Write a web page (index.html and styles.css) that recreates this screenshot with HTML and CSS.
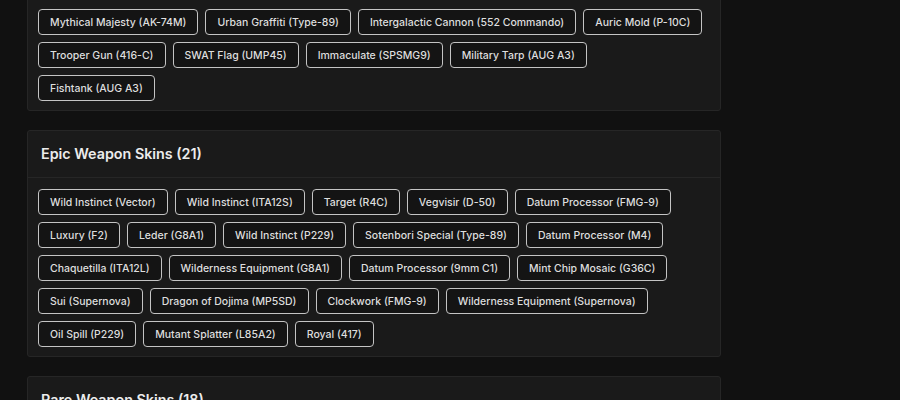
FILE: index.html
```html
<!DOCTYPE html>
<html lang="en">
<head>
<meta charset="utf-8">
<title>Weapon Skins</title>
<link rel="stylesheet" href="styles.css">
</head>
<body>
<main class="page">
  <section class="card">
    <header class="card-head"><h2 class="card-title">Legendary Weapon Skins (9)</h2></header>
    <div class="chips">
      <span class="chip">Mythical Majesty (AK-74M)</span>
      <span class="chip">Urban Graffiti (Type-89)</span>
      <span class="chip">Intergalactic Cannon (552 Commando)</span>
      <span class="chip">Auric Mold (P-10C)</span>
      <span class="chip">Trooper Gun (416-C)</span>
      <span class="chip">SWAT Flag (UMP45)</span>
      <span class="chip">Immaculate (SPSMG9)</span>
      <span class="chip">Military Tarp (AUG A3)</span>
      <span class="chip">Fishtank (AUG A3)</span>
    </div>
  </section>
  <section class="card">
    <header class="card-head"><h2 class="card-title">Epic Weapon Skins (21)</h2></header>
    <div class="chips">
      <span class="chip">Wild Instinct (Vector)</span>
      <span class="chip">Wild Instinct (ITA12S)</span>
      <span class="chip">Target (R4C)</span>
      <span class="chip">Vegvisir (D-50)</span>
      <span class="chip">Datum Processor (FMG-9)</span>
      <span class="chip">Luxury (F2)</span>
      <span class="chip">Leder (G8A1)</span>
      <span class="chip">Wild Instinct (P229)</span>
      <span class="chip">Sotenbori Special (Type-89)</span>
      <span class="chip">Datum Processor (M4)</span>
      <span class="chip">Chaquetilla (ITA12L)</span>
      <span class="chip">Wilderness Equipment (G8A1)</span>
      <span class="chip">Datum Processor (9mm C1)</span>
      <span class="chip">Mint Chip Mosaic (G36C)</span>
      <span class="chip">Sui (Supernova)</span>
      <span class="chip">Dragon of Dojima (MP5SD)</span>
      <span class="chip">Clockwork (FMG-9)</span>
      <span class="chip">Wilderness Equipment (Supernova)</span>
      <span class="chip">Oil Spill (P229)</span>
      <span class="chip">Mutant Splatter (L85A2)</span>
      <span class="chip">Royal (417)</span>
    </div>
  </section>
  <section class="card">
    <header class="card-head"><h2 class="card-title">Rare Weapon Skins (18)</h2></header>
    <div class="chips">
      <span class="chip">Placeholder</span>
    </div>
  </section>
</main>
</body>
</html>
```
FILE: styles.css
```css
html, body {
  margin: 0;
  padding: 0;
  background: #111111;
}
body {
  font-family: Inter, "Open Sans", sans-serif;
  color: #e2e2e2;
}
.page {
  width: 694px;
  margin: -50px 0 0 27px;
  display: flex;
  flex-direction: column;
  gap: 19px;
}
.card {
  background: #1a1a1a;
  border: 1px solid #262626;
  border-radius: 3px;
}
.card-head {
  padding: 12px 13px;
  border-bottom: 1px solid #262626;
}
.card-title {
  margin: 0;
  font-size: 14.3px;
  line-height: 22px;
  font-weight: 600;
  color: #ececec;
}
.chips {
  display: flex;
  flex-wrap: wrap;
  gap: 7px 7px;
  padding: 11px 10px 9px;
}
.chip {
  display: inline-block;
  height: 24px;
  box-sizing: content-box;
  line-height: 25px;
  padding: 0 11px;
  border: 1px solid #c4c4c4;
  border-radius: 4px;
  background: #141414;
  font-size: 10.5px;
  font-weight: 500;
  color: #dedede;
  white-space: nowrap;
}
```
